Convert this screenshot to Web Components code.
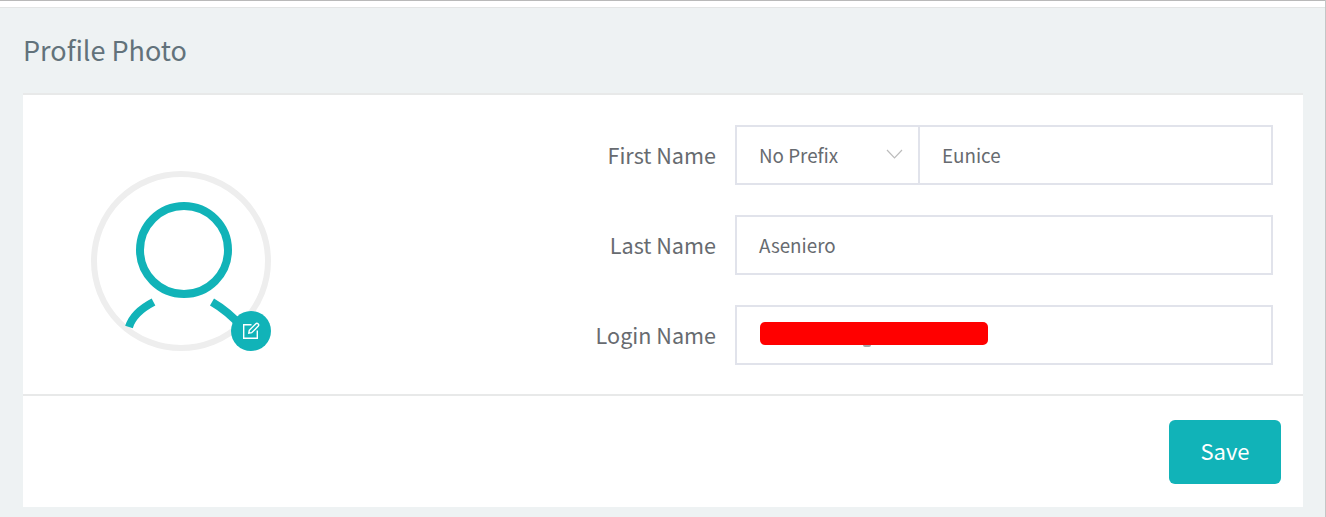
<!DOCTYPE html>
<html>
<head>
<meta charset="utf-8">
<title>Profile Photo</title>
<style>
  html, body { margin: 0; height: 100%; }
  body { font-family: "Noto Sans CJK SC", "Noto Sans", sans-serif; overflow: hidden; }
</style>
</head>
<body>
<profile-page heading="Profile Photo">
  <profile-avatar slot="side"></profile-avatar>
  <form-field label="First Name">
    <prefix-select value="No Prefix"></prefix-select>
    <text-box value="Eunice"></text-box>
  </form-field>
  <form-field label="Last Name">
    <text-box value="Aseniero"></text-box>
  </form-field>
  <form-field label="Login Name">
    <text-box redacted></text-box>
  </form-field>
  <save-button slot="footer">Save</save-button>
</profile-page>

<script>
class ProfilePage extends HTMLElement {
  constructor() {
    super();
    this.attachShadow({ mode: 'open' });
  }

  connectedCallback() {
    this.shadowRoot.innerHTML = /* html */ `
      <style>
        :host {
          display: block;
          height: 517px;
          box-sizing: border-box;
          background: #eef2f3;
          border-right: 1px solid #c4c6c6;
        }
        .top {
          height: 8px;
          box-sizing: border-box;
          background: #fff;
          border-top: 1px solid #b9b9b9;
          border-bottom: 1px solid #e3e5e5;
        }
        h2 {
          margin: 0;
          height: 85px;
          box-sizing: border-box;
          padding: 22px 0 0 23px;
          font-size: 27px;
          font-weight: 400;
          line-height: 40px;
          color: #62727b;
        }
        .card {
          margin: 0 22px 0 23px;
          height: 414px;
          box-sizing: border-box;
          background: #fff;
          border-top: 2px solid #e8e9e9;
          display: flex;
          flex-direction: column;
        }
        .body {
          height: 301px;
          box-sizing: border-box;
          padding: 30px 30px 0 68px;
          border-bottom: 2px solid #e8e9e9;
          display: flex;
          justify-content: space-between;
        }
        .fields {
          display: flex;
          flex-direction: column;
          gap: 30px;
        }
        .foot {
          flex: 1;
          display: flex;
          justify-content: flex-end;
          align-items: flex-start;
          padding: 24px 22px 0 0;
        }
      </style>
      <div class="top"></div>
      <h2>${this.getAttribute('heading')}</h2>
      <div class="card">
        <div class="body">
          <slot name="side"></slot>
          <div class="fields"><slot></slot></div>
        </div>
        <div class="foot"><slot name="footer"></slot></div>
      </div>
    `;
  }
}

class ProfileAvatar extends HTMLElement {
  constructor() {
    super();
    this.attachShadow({ mode: 'open' });
  }

  connectedCallback() {
    this.shadowRoot.innerHTML = /* html */ `
      <style>
        :host {
          display: block;
          position: relative;
          width: 180px;
          height: 180px;
          margin-top: 46px;
        }
        svg { display: block; }
        .badge {
          position: absolute;
          left: 140px;
          top: 140px;
          width: 40px;
          height: 40px;
          border-radius: 50%;
          background: #11b3b8;
          display: flex;
          align-items: center;
          justify-content: center;
        }
      </style>
      <svg width="180" height="180" viewBox="0 0 180 180" fill="none">
        <circle cx="90" cy="90" r="87" stroke="#eeeeee" stroke-width="6"/>
        <circle cx="93" cy="79" r="44" stroke="#11b3b8" stroke-width="8"/>
        <path d="M62.500 131C49 138 41 146 38 156" stroke="#11b3b8" stroke-width="8"/>
        <path d="M121 131C133 138 142 146 150 155" stroke="#11b3b8" stroke-width="8"/>
      </svg>
      <div class="badge">
        <svg width="18" height="18" viewBox="0 0 18 18" fill="none" stroke="#fff" stroke-width="1.400">
          <path d="M9.500 2.700H1.700V16.300H15.300V8.500"/>
          <path d="M6.800 11.200L7.300 8.300L13.900 1.700C14.500 1.100 15.300 1.100 15.900 1.700L16.300 2.100C16.900 2.700 16.900 3.500 16.300 4.100L9.700 10.700Z"/>
        </svg>
      </div>
    `;
  }
}

class FormField extends HTMLElement {
  constructor() {
    super();
    this.attachShadow({ mode: 'open' });
  }

  connectedCallback() {
    this.shadowRoot.innerHTML = /* html */ `
      <style>
        :host {
          display: flex;
          align-items: center;
          height: 60px;
        }
        label {
          width: 140px;
          margin: -2px 19px 0 0;
          text-align: right;
          font-size: 21.600px;
          color: #676b70;
          white-space: nowrap;
        }
        .controls {
          display: flex;
          width: 538px;
          height: 60px;
        }
      </style>
      <label>${this.getAttribute('label')}</label>
      <div class="controls"><slot></slot></div>
    `;
  }
}

class TextBox extends HTMLElement {
  constructor() {
    super();
    this.attachShadow({ mode: 'open' });
  }

  connectedCallback() {
    const value = this.getAttribute('value') ?? '';
    const mask = this.hasAttribute('redacted') ? '<i></i>' : '';
    this.shadowRoot.innerHTML = /* html */ `
      <style>
        :host {
          display: flex;
          align-items: center;
          position: relative;
          flex: 1;
          min-width: 0;
          box-sizing: border-box;
          border: 2px solid #e1e3eb;
          padding: 0 0 2px 22px;
          font-size: 18.800px;
          color: #676b70;
        }
        /* red bar laid over the hidden login name */
        i {
          position: absolute;
          left: 23px;
          top: 15px;
          width: 228px;
          height: 23px;
          border-radius: 5px;
          background: #ff0000;
        }
        /* tail of a letter that pokes out under the bar */
        i::after {
          content: "";
          position: absolute;
          left: 103px;
          top: 23px;
          width: 8px;
          height: 2px;
          border-radius: 0 0 4px 4px;
          background: #a5a7aa;
        }
      </style>
      <span>${value}</span>${mask}
    `;
  }
}

class PrefixSelect extends HTMLElement {
  constructor() {
    super();
    this.attachShadow({ mode: 'open' });
  }

  connectedCallback() {
    this.shadowRoot.innerHTML = /* html */ `
      <style>
        :host {
          display: flex;
          align-items: center;
          justify-content: space-between;
          flex: 0 0 183px;
          box-sizing: border-box;
          border: 2px solid #e1e3eb;
          border-right: 0;
          padding: 0 15px 2px 22px;
          font-size: 18.800px;
          color: #676b70;
        }
        svg { display: block; }
      </style>
      <span>${this.getAttribute('value')}</span>
      <svg width="17" height="10" viewBox="0 0 17 10" fill="none" stroke="#bcbcbc" stroke-width="1.200">
        <path d="M1 1L8.500 8.800L16 1"/>
      </svg>
    `;
  }
}

class SaveButton extends HTMLElement {
  constructor() {
    super();
    this.attachShadow({ mode: 'open' });
  }

  connectedCallback() {
    this.shadowRoot.innerHTML = /* html */ `
      <style>
        :host { display: block; }
        button {
          display: block;
          width: 112px;
          height: 64px;
          border: 0;
          border-radius: 6px;
          padding: 0 0 4px;
          background: #11b3b8;
          color: #fff;
          font: inherit;
          font-size: 22px;
          cursor: pointer;
        }
      </style>
      <button type="button"><slot></slot></button>
    `;
  }
}

customElements.define('profile-page', ProfilePage);
customElements.define('profile-avatar', ProfileAvatar);
customElements.define('form-field', FormField);
customElements.define('text-box', TextBox);
customElements.define('prefix-select', PrefixSelect);
customElements.define('save-button', SaveButton);
</script>
</body>
</html>
